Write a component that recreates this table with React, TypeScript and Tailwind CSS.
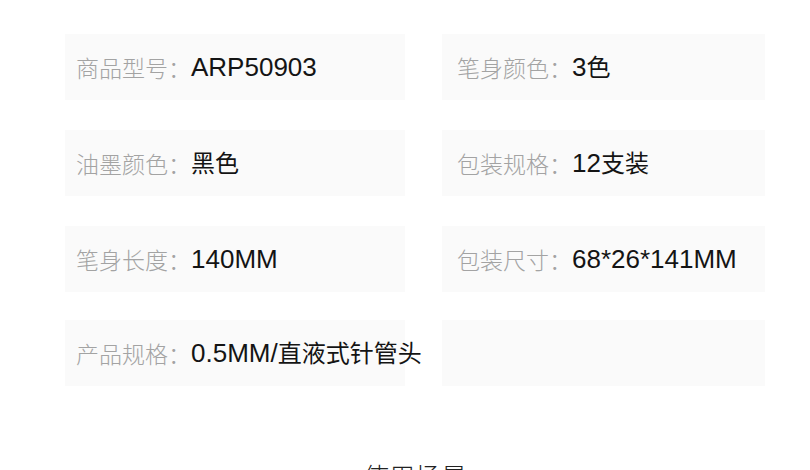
const specs = [
    { label: "商品型号", value: "ARP50903" },
    { label: "笔身颜色", value: "3色" },
    { label: "油墨颜色", value: "黑色" },
    { label: "包装规格", value: "12支装" },
    { label: "笔身长度", value: "140MM" },
    { label: "包装尺寸", value: "68*26*141MM" },
    { label: "产品规格", value: "0.5MM/直液式针管头" },
    { label: "", value: "" },
];

// latin runs a bit larger than the CJK runs, like the original font
const renderValue = (text: string) =>
    text.split(/([\u4e00-\u9fff]+)/).map((part, i) =>
        /[\u4e00-\u9fff]/.test(part) ? (
            <span key={i} className="text-[24px]">
                {part}
            </span>
        ) : (
            <span key={i}>{part}</span>
        )
    );

export default function App() {
    return (
        <div className="w-[810px] h-[470px] overflow-hidden bg-white font-['Liberation_Sans','Noto_Sans_CJK_SC',sans-serif]">
            <div className="pt-[34px] pl-[65px] grid grid-cols-[340px_323px] gap-x-[37px] gap-y-[30px]">
                {specs.map((item, index) => (
                    <div
                        key={index}
                        className={`h-[66px] bg-[#fafafa] flex items-center whitespace-nowrap ${
                            index % 2 === 0 ? "pl-[11px]" : "pl-[15px]"
                        } ${index > 5 ? "-mt-[2px]" : ""}`}
                    >
                        {item.label && (
                            <>
                                <span className="text-[23px] text-[#a3a3a3] font-['Noto_Sans_CJK_SC',sans-serif] font-light">
                                    {item.label}：
                                </span>
                                <span className="text-[26px] text-[#141414]">
                                    {renderValue(item.value)}
                                </span>
                            </>
                        )}
                    </div>
                ))}
            </div>
            <div className="mt-[70px] text-center pl-[20px] text-[26px] leading-[39px] text-[#222] font-['Noto_Sans_CJK_SC',sans-serif] font-light">
                使用场景
            </div>
        </div>
    );
}
